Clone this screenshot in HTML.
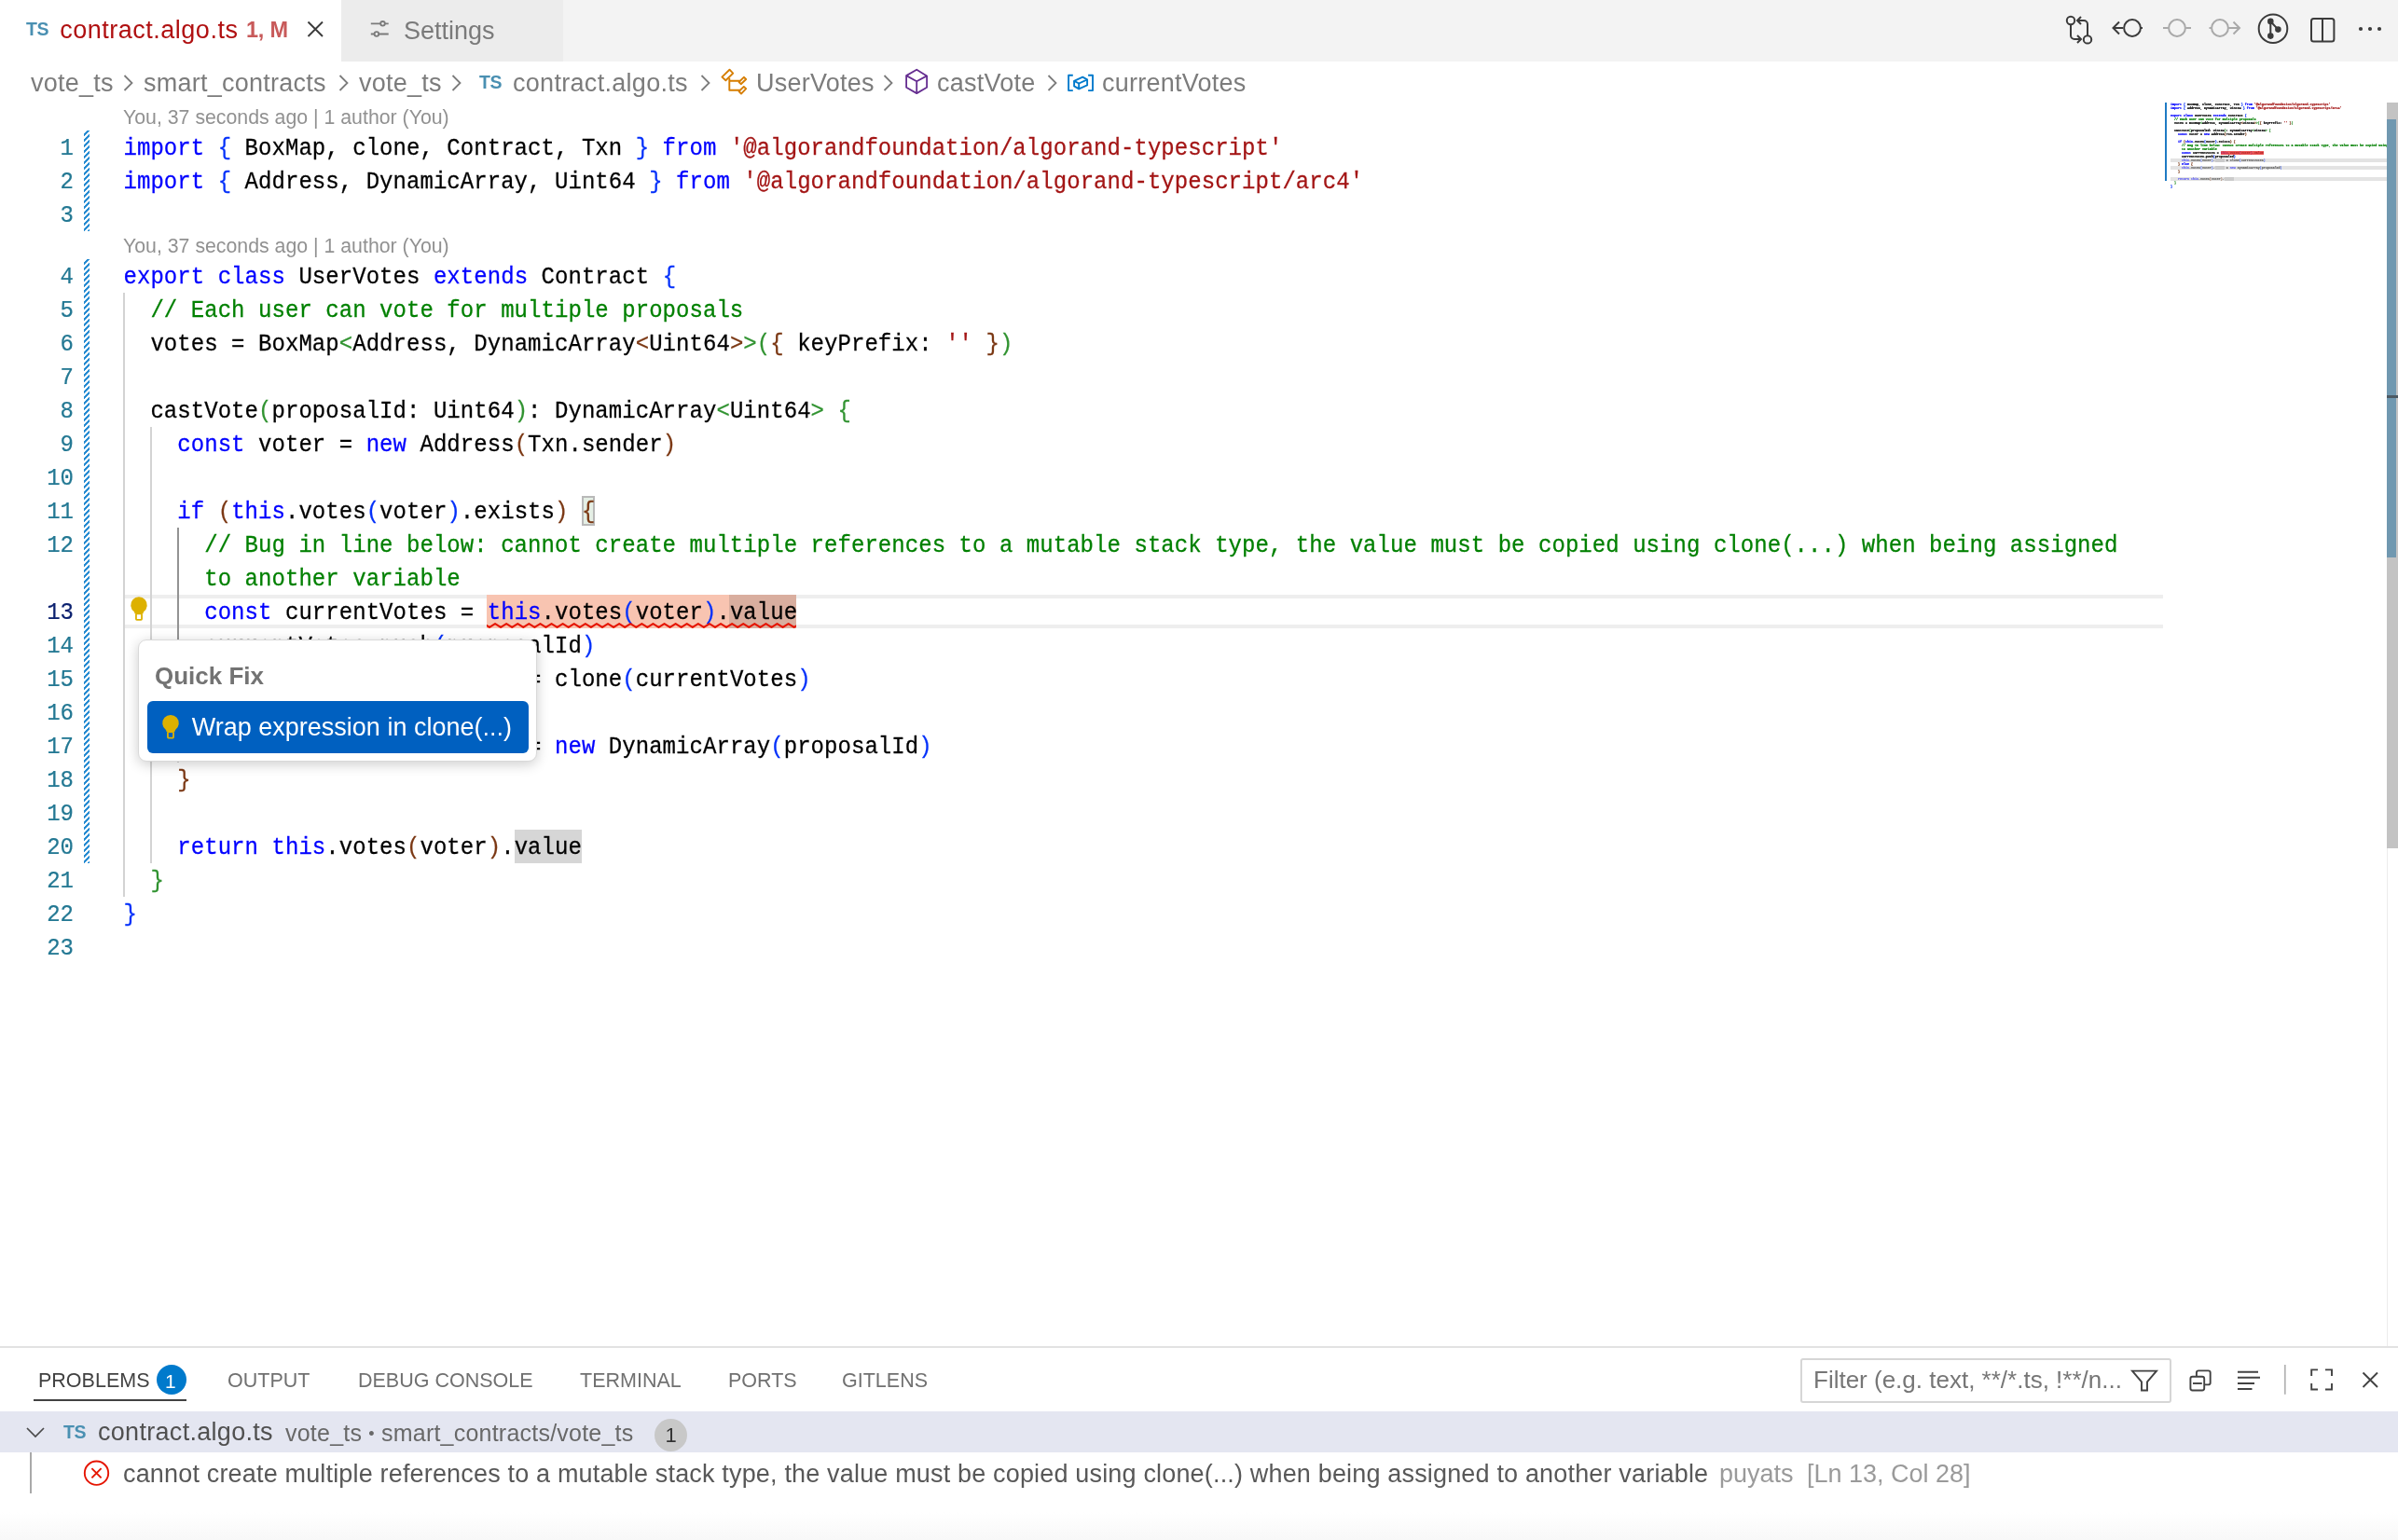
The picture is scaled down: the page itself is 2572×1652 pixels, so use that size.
<!DOCTYPE html>
<html><head><meta charset="utf-8">
<style>
*{margin:0;padding:0;box-sizing:border-box}
html,body{width:2572px;height:1652px;overflow:hidden;background:#fff}
body{position:relative;font-family:"Liberation Sans",sans-serif;color:#333;-webkit-font-smoothing:antialiased}
#root{position:absolute;left:0;top:0;width:2572px;height:1652px;will-change:transform}
.abs{position:absolute}
#tabs{position:absolute;left:0;top:0;width:2572px;height:66px;background:#f3f3f3}
#tab1{position:absolute;left:0;top:0;width:366px;height:66px;background:#fff}
#tab2{position:absolute;left:366px;top:0;width:238px;height:66px;background:#ececec}
.ui{position:absolute;white-space:pre;font-size:27px;line-height:1}
.ts{position:absolute;font-weight:bold;color:#4a90b2;font-size:19.5px;line-height:1;letter-spacing:-0.3px}
#crumbs .ui{color:#7c7c7c;letter-spacing:0.25px;margin-top:-0.7px}
.lens{position:absolute;left:132px;font-size:21.3px;color:#919191;white-space:pre;line-height:1}
.ln{position:absolute;left:132.5px;height:36px;font-family:"Liberation Mono",monospace;font-size:24px;line-height:36px;white-space:pre;color:#000;letter-spacing:0.05px;padding-top:2px;transform:scaleY(1.08);transform-origin:0 26.3px;-webkit-text-stroke:0.25px currentColor}
.k{color:#0000ff}.c{color:#008000}.s{color:#a31515}.b1{color:#0431fa}.b2{color:#319331}.b3{color:#7b3814}
.num{position:absolute;left:0;width:79px;text-align:right;font-family:"Liberation Mono",monospace;font-size:24px;line-height:36px;color:#237893;padding-top:2px;transform:scaleY(1.1);transform-origin:0 26.3px;-webkit-text-stroke:0.2px currentColor}
.num.act{color:#0b216f}
.guide{position:absolute;width:2px}
.hatch{position:absolute;left:90px;width:6px;background:repeating-linear-gradient(-45deg,#288cd2 0 2.1px,transparent 2.1px 4.24px)}
#minimap{position:absolute;left:2328px;top:110px;width:232px;height:120px;overflow:hidden}
.mmwrap{position:absolute;left:0;top:0;transform-origin:0 0;transform:scale(0.1384,0.1111)}
.mln{position:absolute;left:0;font-family:"Liberation Mono",monospace;font-size:24px;line-height:36px;white-space:pre;color:#000;font-weight:bold;height:36px;-webkit-text-stroke:1.6px currentColor}
</style></head><body><div id="root">
<div id="tabs">
  <div id="tab1">
    <div class="ts" style="left:28px;top:21.5px">TS</div>
    <div class="ui" style="left:64.3px;top:19.2px;color:#b01011;letter-spacing:0.5px">contract.algo.ts</div>
    <div class="ui" style="left:264px;top:20.5px;font-size:23.5px;font-weight:bold;color:#c85a5a;letter-spacing:-0.2px">1, M</div>
    <svg class="abs" style="left:327px;top:20px" width="22" height="22" viewBox="0 0 22 22"><path d="M3.5 3.5L19 19M19 3.5L3.5 19" stroke="#3b3b3b" stroke-width="1.9" fill="none"/></svg>
  </div>
  <div id="tab2">
    <svg class="abs" style="left:30px;top:20px" width="22" height="22" viewBox="0 0 22 22" fill="none" stroke="#7a7a7a" stroke-width="1.8"><path d="M1.8 5.3H12.2M16.8 5.3H20.7M1.8 16.5H5.6M10.2 16.5H20.7"/><circle cx="14.5" cy="5.3" r="2.3"/><circle cx="7.9" cy="16.5" r="2.3"/></svg>
    <div class="ui" style="left:67px;top:20px;color:#7a7a7a">Settings</div>
  </div>
  <!-- right actions -->
  <svg class="abs" style="left:2210px;top:12px" width="40" height="40" viewBox="0 0 40 40" fill="none" stroke="#3b3b3b" stroke-width="2">
    <circle cx="11" cy="10" r="4.2"/><path d="M11 14.5V26a4 4 0 0 0 4 4h7"/><path d="M18 26l4 4-4 4"/>
    <circle cx="29" cy="30.4" r="4.2"/><path d="M29 26V14a4 4 0 0 0-4-4h-7"/><path d="M22 6l-4 4 4 4"/>
  </svg>
  <svg class="abs" style="left:2262px;top:12px" width="40" height="36" viewBox="0 0 40 36" fill="none" stroke="#3b3b3b" stroke-width="2">
    <path d="M5 18H15M11 11.5L4.5 18L11 24.5"/><circle cx="25" cy="18" r="8.9"/><path d="M34.2 18H36"/>
  </svg>
  <svg class="abs" style="left:2316px;top:12px" width="40" height="36" viewBox="0 0 40 36" fill="none" stroke="#a9a9a9" stroke-width="2">
    <path d="M4 18H9.6"/><circle cx="19" cy="18" r="8.9"/><path d="M28.4 18H34"/>
  </svg>
  <svg class="abs" style="left:2366px;top:12px" width="40" height="36" viewBox="0 0 40 36" fill="none" stroke="#a9a9a9" stroke-width="2">
    <path d="M3.5 18H5.6"/><circle cx="15" cy="18" r="8.9"/><path d="M24.2 18H35M29.5 11.5L36 18L29.5 24.5"/>
  </svg>
  <svg class="abs" style="left:2418px;top:11px" width="40" height="40" viewBox="0 0 40 40" fill="none" stroke="#3b3b3b" stroke-width="2">
    <circle cx="20" cy="19.7" r="15.3"/><path d="M17.3 12V27.6M17.3 12L25.4 20.6"/>
    <circle cx="17.3" cy="11.9" r="2.3" fill="#3b3b3b"/><circle cx="25.4" cy="20.6" r="2.3" fill="#3b3b3b"/><circle cx="17.3" cy="27.6" r="2.3" fill="#3b3b3b"/>
  </svg>
  <svg class="abs" style="left:2474px;top:14px" width="34" height="34" viewBox="0 0 34 34" fill="none" stroke="#3b3b3b" stroke-width="2">
    <rect x="5" y="6" width="24.4" height="24.4" rx="2.5"/><path d="M17 6V30.4"/>
  </svg>
  <svg class="abs" style="left:2524px;top:24px" width="36" height="14" viewBox="0 0 36 14" fill="#3b3b3b">
    <circle cx="8" cy="7" r="2.1"/><circle cx="18" cy="7" r="2.1"/><circle cx="28" cy="7" r="2.1"/>
  </svg>
</div>

<div id="crumbs">
  <div class="ui" style="left:33px;top:77px">vote_ts</div>
  <svg class="abs" style="left:130px;top:78px" width="16" height="22" viewBox="0 0 16 22"><path d="M3.5 3L11.5 11L3.5 19" stroke="#7c7c7c" stroke-width="1.8" fill="none"/></svg>
  <div class="ui" style="left:154px;top:77px">smart_contracts</div>
  <svg class="abs" style="left:361px;top:78px" width="16" height="22" viewBox="0 0 16 22"><path d="M3.5 3L11.5 11L3.5 19" stroke="#7c7c7c" stroke-width="1.8" fill="none"/></svg>
  <div class="ui" style="left:385px;top:77px">vote_ts</div>
  <svg class="abs" style="left:482px;top:78px" width="16" height="22" viewBox="0 0 16 22"><path d="M3.5 3L11.5 11L3.5 19" stroke="#7c7c7c" stroke-width="1.8" fill="none"/></svg>
  <div class="ts" style="left:514px;top:78.5px">TS</div>
  <div class="ui" style="left:550px;top:77px;letter-spacing:0.3px">contract.algo.ts</div>
  <svg class="abs" style="left:749px;top:78px" width="16" height="22" viewBox="0 0 16 22"><path d="M3.5 3L11.5 11L3.5 19" stroke="#7c7c7c" stroke-width="1.8" fill="none"/></svg>
  <svg class="abs" style="left:765px;top:68px" width="45" height="38" viewBox="0 0 45 38" fill="none" stroke="#d67e00" stroke-width="1.9" stroke-linejoin="round">
    <path d="M17.5 6.7L21.2 10.6L13.4 18.3L9.4 14.6Z"/><path d="M32.8 14.8L35.2 17L29.7 22.2L27.6 20Z"/><path d="M32.8 24.9L35.2 27.1L30 32.6L27.6 30Z"/><path d="M17.3 15.8V28.7H28.6M17.3 18.75H28.6"/>
  </svg>
  <div class="ui" style="left:811px;top:77px">UserVotes</div>
  <svg class="abs" style="left:945px;top:78px" width="16" height="22" viewBox="0 0 16 22"><path d="M3.5 3L11.5 11L3.5 19" stroke="#7c7c7c" stroke-width="1.8" fill="none"/></svg>
  <svg class="abs" style="left:962px;top:68px" width="45" height="38" viewBox="0 0 45 38" fill="none" stroke="#652d90" stroke-width="1.8" stroke-linejoin="round">
    <path d="M21.2 6.7L32.1 13.4V25.7L21.2 32.1L10.1 25.7V13.1Z"/><path d="M10.1 13.1L21.2 19.2L32.1 13.4M21.2 19.2V32.1"/>
  </svg>
  <div class="ui" style="left:1005px;top:77px">castVote</div>
  <svg class="abs" style="left:1121px;top:78px" width="16" height="22" viewBox="0 0 16 22"><path d="M3.5 3L11.5 11L3.5 19" stroke="#7c7c7c" stroke-width="1.8" fill="none"/></svg>
  <svg class="abs" style="left:1138px;top:68px" width="45" height="38" viewBox="0 0 45 38" fill="none" stroke="#007acc" stroke-width="1.9" stroke-linejoin="round">
    <path d="M12.8 12.8H8.1V29.1H12.8M29.1 12.8H34V29.1H29.1"/><path d="M14.1 18.8L23.2 14.6L28.1 17.3L19.2 21.5Z"/><path d="M28.1 17.3V23.4L19.2 27.4V21.5M14.1 18.8V24.4L19.2 27.4"/>
  </svg>
  <div class="ui" style="left:1182px;top:77px">currentVotes</div>
</div>

<!-- code lens -->
<div class="lens" style="top:116px">You, 37 seconds ago | 1 author (You)</div>
<div class="lens" style="top:254px">You, 37 seconds ago | 1 author (You)</div>

<!-- current line highlight -->
<div class="abs" style="left:132px;top:638px;width:2188px;height:36px;border-top:4px solid #eeeeee;border-bottom:4px solid #eeeeee"></div>
<!-- bracket match -->
<div class="abs" style="left:624px;top:532px;width:14px;height:32px;background:#e5efe5;border:2px solid #b9b9b9"></div>
<!-- error region highlight -->
<div class="abs" style="left:522px;top:638px;width:332px;height:36px;background:#f8c4b1"></div>
<div class="abs" style="left:782px;top:638px;width:72px;height:36px;background:#d9ae9f"></div>
<!-- word highlight line 20 -->
<div class="abs" style="left:552px;top:890px;width:72px;height:36px;background:#d6d6d6"></div>

<div class="guide" style="left:132.0px;top:314px;height:648px;background:#d3d3d3"></div>
<div class="guide" style="left:160.9px;top:458px;height:468px;background:#d3d3d3"></div>
<div class="guide" style="left:189.8px;top:566px;height:180px;background:#939393"></div>
<div class="guide" style="left:189.8px;top:782px;height:36px;background:#d3d3d3"></div>

<div class="hatch" style="top:140px;height:108px"></div>
<div class="hatch" style="top:278px;height:648px"></div>

<div class="num" style="top:140px">1</div>
<div class="num" style="top:176px">2</div>
<div class="num" style="top:212px">3</div>
<div class="num" style="top:278px">4</div>
<div class="num" style="top:314px">5</div>
<div class="num" style="top:350px">6</div>
<div class="num" style="top:386px">7</div>
<div class="num" style="top:422px">8</div>
<div class="num" style="top:458px">9</div>
<div class="num" style="top:494px">10</div>
<div class="num" style="top:530px">11</div>
<div class="num" style="top:566px">12</div>
<div class="num act" style="top:638px">13</div>
<div class="num" style="top:674px">14</div>
<div class="num" style="top:710px">15</div>
<div class="num" style="top:746px">16</div>
<div class="num" style="top:782px">17</div>
<div class="num" style="top:818px">18</div>
<div class="num" style="top:854px">19</div>
<div class="num" style="top:890px">20</div>
<div class="num" style="top:926px">21</div>
<div class="num" style="top:962px">22</div>
<div class="num" style="top:998px">23</div>
<div class="ln" style="top:140px"><span class="k">import</span> <span class="b1">{</span> BoxMap, clone, Contract, Txn <span class="b1">}</span> <span class="k">from</span> <span class="s">&#x27;@algorandfoundation/algorand-typescript&#x27;</span></div>
<div class="ln" style="top:176px"><span class="k">import</span> <span class="b1">{</span> Address, DynamicArray, Uint64 <span class="b1">}</span> <span class="k">from</span> <span class="s">&#x27;@algorandfoundation/algorand-typescript/arc4&#x27;</span></div>
<div class="ln" style="top:212px"></div>
<div class="ln" style="top:278px"><span class="k">export</span> <span class="k">class</span> UserVotes <span class="k">extends</span> Contract <span class="b1">{</span></div>
<div class="ln" style="top:314px">  <span class="c">// Each user can vote for multiple proposals</span></div>
<div class="ln" style="top:350px">  votes = BoxMap<span class="b2">&lt;</span>Address, DynamicArray<span class="b3">&lt;</span>Uint64<span class="b3">&gt;</span><span class="b2">&gt;</span><span class="b2">(</span><span class="b3">{</span> keyPrefix: <span class="s">&#x27;&#x27;</span> <span class="b3">}</span><span class="b2">)</span></div>
<div class="ln" style="top:386px"></div>
<div class="ln" style="top:422px">  castVote<span class="b2">(</span>proposalId: Uint64<span class="b2">)</span>: DynamicArray<span class="b2">&lt;</span>Uint64<span class="b2">&gt;</span> <span class="b2">{</span></div>
<div class="ln" style="top:458px">    <span class="k">const</span> voter = <span class="k">new</span> Address<span class="b3">(</span>Txn.sender<span class="b3">)</span></div>
<div class="ln" style="top:494px"></div>
<div class="ln" style="top:530px">    <span class="k">if</span> <span class="b3">(</span><span class="k">this</span>.votes<span class="b1">(</span>voter<span class="b1">)</span>.exists<span class="b3">)</span> <span class="b3">{</span></div>
<div class="ln" style="top:566px">      <span class="c">// Bug in line below: cannot create multiple references to a mutable stack type, the value must be copied using clone(...) when being assigned</span></div>
<div class="ln" style="top:602px">      <span class="c">to another variable</span></div>
<div class="ln" style="top:638px">      <span class="k">const</span> currentVotes = <span class="k">this</span>.votes<span class="b1">(</span>voter<span class="b1">)</span>.value</div>
<div class="ln" style="top:674px">      currentVotes.push<span class="b1">(</span>proposalId<span class="b1">)</span></div>
<div class="ln" style="top:710px">      <span class="k">this</span>.votes<span class="b1">(</span>voter<span class="b1">)</span>.value = clone<span class="b1">(</span>currentVotes<span class="b1">)</span></div>
<div class="ln" style="top:746px">    <span class="b3">}</span> <span class="k">else</span> <span class="b3">{</span></div>
<div class="ln" style="top:782px">      <span class="k">this</span>.votes<span class="b1">(</span>voter<span class="b1">)</span>.value = <span class="k">new</span> DynamicArray<span class="b1">(</span>proposalId<span class="b1">)</span></div>
<div class="ln" style="top:818px">    <span class="b3">}</span></div>
<div class="ln" style="top:854px"></div>
<div class="ln" style="top:890px">    <span class="k">return</span> <span class="k">this</span>.votes<span class="b3">(</span>voter<span class="b3">)</span>.value</div>
<div class="ln" style="top:926px">  <span class="b2">}</span></div>
<div class="ln" style="top:962px"><span class="b1">}</span></div>
<div class="ln" style="top:998px"></div>

<!-- squiggle -->
<svg class="abs" style="left:522px;top:666px" width="332" height="9" viewBox="0 0 332 9"><path id="sq" d="M-3.05 3.1 L3.00 6.9 L9.05 3.1 L15.10 6.9 L21.15 3.1 L27.20 6.9 L33.25 3.1 L39.30 6.9 L45.35 3.1 L51.40 6.9 L57.45 3.1 L63.50 6.9 L69.55 3.1 L75.60 6.9 L81.65 3.1 L87.70 6.9 L93.75 3.1 L99.80 6.9 L105.85 3.1 L111.90 6.9 L117.95 3.1 L124.00 6.9 L130.05 3.1 L136.10 6.9 L142.15 3.1 L148.20 6.9 L154.25 3.1 L160.30 6.9 L166.35 3.1 L172.40 6.9 L178.45 3.1 L184.50 6.9 L190.55 3.1 L196.60 6.9 L202.65 3.1 L208.70 6.9 L214.75 3.1 L220.80 6.9 L226.85 3.1 L232.90 6.9 L238.95 3.1 L245.00 6.9 L251.05 3.1 L257.10 6.9 L263.15 3.1 L269.20 6.9 L275.25 3.1 L281.30 6.9 L287.35 3.1 L293.40 6.9 L299.45 3.1 L305.50 6.9 L311.55 3.1 L317.60 6.9 L323.65 3.1 L329.70 6.9 L335.75 3.1 L341.80 6.9 L347.85 3.1" stroke="#e51400" stroke-width="2.1" stroke-linejoin="round" fill="none"/></svg>

<!-- lightbulb -->
<svg class="abs" style="left:132px;top:634px" width="34" height="38" viewBox="0 0 34 38"><path d="M11.94 22.2A8.8 8.8 0 1 1 22.06 22.2L21.3 24.4H12.7Z" fill="#ddb100"/><rect x="13.95" y="24.4" width="6.1" height="6.5" rx="0.8" fill="none" stroke="#ddb100" stroke-width="1.8"/></svg>

<!-- quick fix popup -->
<div class="abs" style="left:148px;top:686px;width:428px;height:131px;background:#fff;border:1.5px solid #d9d9d9;border-radius:9px;box-shadow:0 3px 14px rgba(0,0,0,0.2)">
  <div class="ui" style="left:17px;top:25px;font-size:26px;font-weight:bold;color:#737373">Quick Fix</div>
  <div class="abs" style="left:8.8px;top:65px;width:409.5px;height:55.5px;background:#0060c0;border-radius:6px">
    <svg class="abs" style="left:8.5px;top:8.5px" width="34" height="38" viewBox="0 0 34 38"><g transform="translate(0,-0.3)"><path d="M11.94 22.2A8.8 8.8 0 1 1 22.06 22.2L21.3 24.4H12.7Z" fill="#ddb100"/><rect x="13.95" y="24.4" width="6.1" height="6.5" rx="0.8" fill="none" stroke="#ddb100" stroke-width="1.8"/></g></svg>
    <div class="ui" style="left:48px;top:15px;color:#fff">Wrap expression in clone(...)</div>
  </div>
</div>

<!-- minimap -->
<div id="minimap">
  <div class="abs" style="left:0;top:0;width:0;height:0"></div>
</div>
<div class="abs" style="left:2322px;top:110px;width:2px;height:84px;background:#1f7bc4"></div>
<div class="abs" style="left:2328px;top:170px;width:232px;height:4px;background:#e3e3e3"></div>
<div class="abs" style="left:2328px;top:178px;width:232px;height:4px;background:#e3e3e3"></div>
<div class="abs" style="left:2328px;top:190px;width:232px;height:4px;background:#e3e3e3"></div>
<div id="mmtext" class="abs" style="left:2328px;top:110px;width:232px;height:100px;overflow:hidden">
  <div class="mmwrap">
<div class="mln" style="top:0px"><span class="k">import</span> <span class="b1">{</span> BoxMap, clone, Contract, Txn <span class="b1">}</span> <span class="k">from</span> <span class="s">&#x27;@algorandfoundation/algorand-typescript&#x27;</span></div>
<div class="mln" style="top:36px"><span class="k">import</span> <span class="b1">{</span> Address, DynamicArray, Uint64 <span class="b1">}</span> <span class="k">from</span> <span class="s">&#x27;@algorandfoundation/algorand-typescript/arc4&#x27;</span></div>
<div class="mln" style="top:72px"></div>
<div class="mln" style="top:108px"><span class="k">export</span> <span class="k">class</span> UserVotes <span class="k">extends</span> Contract <span class="b1">{</span></div>
<div class="mln" style="top:144px">  <span class="c">// Each user can vote for multiple proposals</span></div>
<div class="mln" style="top:180px">  votes = BoxMap<span class="b2">&lt;</span>Address, DynamicArray<span class="b3">&lt;</span>Uint64<span class="b3">&gt;</span><span class="b2">&gt;</span><span class="b2">(</span><span class="b3">{</span> keyPrefix: <span class="s">&#x27;&#x27;</span> <span class="b3">}</span><span class="b2">)</span></div>
<div class="mln" style="top:216px"></div>
<div class="mln" style="top:252px">  castVote<span class="b2">(</span>proposalId: Uint64<span class="b2">)</span>: DynamicArray<span class="b2">&lt;</span>Uint64<span class="b2">&gt;</span> <span class="b2">{</span></div>
<div class="mln" style="top:288px">    <span class="k">const</span> voter = <span class="k">new</span> Address<span class="b3">(</span>Txn.sender<span class="b3">)</span></div>
<div class="mln" style="top:324px"></div>
<div class="mln" style="top:360px">    <span class="k">if</span> <span class="b3">(</span><span class="k">this</span>.votes<span class="b1">(</span>voter<span class="b1">)</span>.exists<span class="b3">)</span> <span class="b3">{</span></div>
<div class="mln" style="top:396px">      <span class="c">// Bug in line below: cannot create multiple references to a mutable stack type, the value must be copied using clone(...) when being assigned</span></div>
<div class="mln" style="top:432px">      <span class="c">to another variable</span></div>
<div class="mln" style="top:468px">      <span class="k">const</span> currentVotes = <span class="k">this</span>.votes<span class="b1">(</span>voter<span class="b1">)</span>.value</div>
<div class="mln" style="top:504px">      currentVotes.push<span class="b1">(</span>proposalId<span class="b1">)</span></div>
<div class="mln" style="top:540px;opacity:0.55">      <span class="k">this</span>.votes<span class="b1">(</span>voter<span class="b1">)</span>.value = clone<span class="b1">(</span>currentVotes<span class="b1">)</span></div>
<div class="mln" style="top:576px">    <span class="b3">}</span> <span class="k">else</span> <span class="b3">{</span></div>
<div class="mln" style="top:612px;opacity:0.55">      <span class="k">this</span>.votes<span class="b1">(</span>voter<span class="b1">)</span>.value = <span class="k">new</span> DynamicArray<span class="b1">(</span>proposalId<span class="b1">)</span></div>
<div class="mln" style="top:648px">    <span class="b3">}</span></div>
<div class="mln" style="top:684px"></div>
<div class="mln" style="top:720px;opacity:0.55">    <span class="k">return</span> <span class="k">this</span>.votes<span class="b3">(</span>voter<span class="b3">)</span>.value</div>
<div class="mln" style="top:756px">  <span class="b2">}</span></div>
<div class="mln" style="top:792px"><span class="b1">}</span></div>
<div class="mln" style="top:828px"></div>
  </div>
</div>
<div class="abs" style="left:2382px;top:162px;width:46px;height:4px;background:rgba(232,50,50,0.8)"></div>
<div class="abs" style="left:2376px;top:170px;width:10px;height:4px;background:#cbcbcb"></div>
<div class="abs" style="left:2376px;top:178px;width:10px;height:4px;background:#cbcbcb"></div>
<div class="abs" style="left:2386px;top:190px;width:10px;height:4px;background:#cbcbcb"></div>

<!-- scrollbar -->
<div class="abs" style="left:2560px;top:110px;width:12px;height:800px;background:#c3c3c3"></div>
<div class="abs" style="left:2560px;top:128px;width:10px;height:470px;background:#7098b0"></div>
<div class="abs" style="left:2560px;top:424px;width:12px;height:3px;background:#4d5a63"></div>
<div class="abs" style="left:2560px;top:910px;width:1px;height:535px;background:#ececec"></div>

<!-- panel -->
<div class="abs" style="left:0;top:1444px;width:2572px;height:2px;background:#e2e2e2"></div>
<div id="panel">
  <div class="ui" style="left:41px;top:1471px;font-size:21.5px;color:#424242">PROBLEMS</div>
  <div class="abs" style="left:168px;top:1464px;width:32px;height:32px;border-radius:50%;background:#007acc"></div>
  <div class="ui" style="left:177px;top:1471px;font-size:21px;color:#fff">1</div>
  <div class="abs" style="left:36px;top:1501px;width:164px;height:2px;background:#424242"></div>
  <div class="ui" style="left:244px;top:1471px;font-size:21.5px;color:#717171">OUTPUT</div>
  <div class="ui" style="left:384px;top:1471px;font-size:21.5px;color:#717171">DEBUG CONSOLE</div>
  <div class="ui" style="left:622px;top:1471px;font-size:21.5px;color:#717171">TERMINAL</div>
  <div class="ui" style="left:781px;top:1471px;font-size:21.5px;color:#717171">PORTS</div>
  <div class="ui" style="left:903px;top:1471px;font-size:21.5px;color:#717171">GITLENS</div>

  <div class="abs" style="left:1931px;top:1457px;width:398px;height:48px;border:2px solid #d6d6d6;border-radius:3px;background:#fff"></div>
  <div class="ui" style="left:1945px;top:1467px;font-size:26px;color:#767676">Filter (e.g. text, **/*.ts, !**/n...</div>
  <svg class="abs" style="left:2270px;top:1450px" width="300" height="56" viewBox="0 0 300 56" fill="none" stroke="#424242" stroke-width="1.9">
    <path d="M17.0 20.6H43L33.0 32.4V41.5H27V32.40000000000009Z"/>
    <rect x="85.90000000000009" y="20.40000000000009" width="14.8" height="15" rx="2.2"/>
    <rect x="79.40000000000009" y="26.700000000000045" width="14.8" height="14.8" rx="2.2" fill="#fff"/>
    <path d="M82.0 34.0H91.80000000000018"/>
    <path d="M130.0 21.8H152M130.0 27.8H154M130.0 34.0H148M130.0 40.0H145.5"/>
    <path d="M180.8 14.0V45.799999999999955" stroke="#b5b5b5" stroke-width="1.8"/>
    <path d="M209.2 26.0V19.40000000000009H216M224.0 19.4H231V26M231.0 34.0V40.5H224M216.0 40.5H209.19999999999982V34"/>
    <path d="M264.5 22.5L280.0 38.0M280.0 22.5L264.5 38.0"/>
  </svg>
  <div class="abs" style="left:0;top:1514px;width:2572px;height:44px;background:#e4e6f1"></div>
  <svg class="abs" style="left:26px;top:1528px" width="24" height="18" viewBox="0 0 24 18" fill="none" stroke="#4a4a4a" stroke-width="1.7"><path d="M3 4L12 13L21 4"/></svg>
  <div class="ts" style="left:68px;top:1526.5px">TS</div>
  <div class="ui" style="left:105px;top:1523.3px;color:#505050;letter-spacing:0.3px">contract.algo.ts</div>
  <div class="ui" style="left:306px;top:1525px;font-size:25px;color:#686868;letter-spacing:0.22px">vote_ts <span style="font-size:18px;position:relative;top:-2px">•</span> smart_contracts/vote_ts</div>
  <div class="abs" style="left:702px;top:1521.5px;width:35px;height:35px;border-radius:50%;background:#c8c8c8"></div>
  <div class="ui" style="left:713.5px;top:1529px;font-size:22px;color:#333">1</div>

  <div class="abs" style="left:32px;top:1558px;width:2px;height:44px;background:#a9a9a9"></div>
  <svg class="abs" style="left:89px;top:1566px" width="30" height="30" viewBox="0 0 30 30" fill="none" stroke="#e51400" stroke-width="1.9"><circle cx="14.5" cy="14.2" r="12.7"/><path d="M9.4 9.1L19.6 19.3M19.6 9.1L9.4 19.3"/></svg>
  <div class="ui" style="left:132px;top:1567.8px;font-size:27px;letter-spacing:0.17px;color:#585858">cannot create multiple references to a mutable stack type, the value must be copied using clone(...) when being assigned to another variable</div>
  <div class="ui" style="left:1844px;top:1567.8px;font-size:27px;color:#9a9a9a">puyats</div>
  <div class="ui" style="left:1938px;top:1567.8px;font-size:27px;color:#9a9a9a">[Ln 13, Col 28]</div>
</div>
<div class="abs" style="left:0;top:1622px;width:2572px;height:30px;background:linear-gradient(#ffffff,#f8f8f8)"></div>
</div></body></html>
